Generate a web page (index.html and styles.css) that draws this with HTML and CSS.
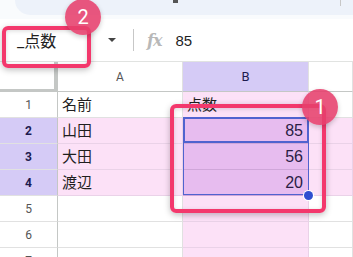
FILE: index.html
```html
<!DOCTYPE html>
<html lang="ja">
<head>
    <meta charset="UTF-8">
    <meta name="viewport" content="width=device-width, initial-scale=1.0">
    <title>名前付き範囲</title>
    <link rel="stylesheet" href="styles.css">
</head>
<body>
    <div class="page">
        <div class="toolbar">
            <span class="tool-mark"></span>
            <span class="tool-sep"></span>
        </div>

        <div class="formula-bar">
            <div class="name-box">_点数</div>
            <span class="caret"></span>
            <span class="divider"></span>
            <span class="fx">fx</span>
            <span class="formula">85</span>
        </div>

        <div class="sheet">
            <div class="corner"></div>
            <div class="col-head">A</div>
            <div class="col-head active">B</div>
            <div class="col-head"></div>

            <div class="row-head">1</div>
            <div class="cell">名前</div>
            <div class="cell pink">点数</div>
            <div class="cell"></div>

            <div class="row-head active">2</div>
            <div class="cell pink">山田</div>
            <div class="cell sel num">85</div>
            <div class="cell pink"></div>

            <div class="row-head active">3</div>
            <div class="cell pink">大田</div>
            <div class="cell sel num">56</div>
            <div class="cell pink"></div>

            <div class="row-head active">4</div>
            <div class="cell pink">渡辺</div>
            <div class="cell sel num">20</div>
            <div class="cell pink"></div>

            <div class="row-head">5</div>
            <div class="cell"></div>
            <div class="cell pink"></div>
            <div class="cell"></div>

            <div class="row-head">6</div>
            <div class="cell"></div>
            <div class="cell pink"></div>
            <div class="cell"></div>

            <div class="row-head">7</div>
            <div class="cell"></div>
            <div class="cell pink"></div>
            <div class="cell"></div>
        </div>

        <!-- selection outline and the callouts sit over the grid -->
        <div class="range"></div>
        <div class="active-cell"></div>
        <div class="handle"></div>

        <div class="mark mark-range"></div>
        <div class="badge badge-range">1</div>
        <div class="mark mark-name"></div>
        <div class="badge badge-name">2</div>
    </div>
</body>
</html>
```

FILE: styles.css
```css
body {
    margin: 0;
    background-color: #f9fbfd;
    font-family: Roboto, "Noto Sans CJK JP", sans-serif;
    overflow: hidden;
}
.page {
    position: relative;
    width: 353px;
    height: 257px;
    overflow: hidden;
}
.toolbar {
    position: relative;
    height: 15px;
    margin-left: 15px;
    background-color: #edf2fa;
    border-bottom-left-radius: 16px;
}
.tool-mark {
    position: absolute;
    left: 158px;
    top: 0;
    width: 5px;
    height: 3px;
    background-color: #555;
}
.tool-sep {
    position: absolute;
    left: 325px;
    top: 0;
    width: 1px;
    height: 6px;
    background-color: #c7c7c7;
}
.formula-bar {
    display: flex;
    align-items: center;
    height: 42px;
    margin-top: 4px;
    background-color: #fff;
    border-bottom: 1px solid #e1e3e1;
}
.name-box {
    width: 90px;
    padding-left: 17px;
    box-sizing: border-box;
    font-size: 16px;
    color: #1f1f1f;
}
.caret {
    width: 0;
    height: 0;
    margin-left: 18px;
    border-left: 4px solid transparent;
    border-right: 4px solid transparent;
    border-top: 4px solid #444;
}
.divider {
    width: 1px;
    height: 22px;
    margin-left: 17px;
    background-color: #c7c7c7;
}
.fx {
    margin-left: 13px;
    font-family: "DejaVu Serif", serif;
    font-style: italic;
    font-weight: bold;
    font-size: 16px;
    color: #b8b8b8;
    letter-spacing: -1px;
}
.formula {
    margin-left: 14px;
    font-family: "Liberation Sans", Arial, sans-serif;
    font-size: 15px;
    color: #1f1f1f;
}
.sheet {
    display: grid;
    grid-template-columns: 58px 125px 126px 44px;
    grid-template-rows: 30px repeat(7, 26px);
    background-color: #fff;
}
.corner {
    border-right: 4px solid #c4c7c5;
    border-bottom: 3px solid #c4c7c5;
    box-sizing: border-box;
}
.col-head,
.row-head {
    display: flex;
    align-items: center;
    justify-content: center;
    font-size: 12px;
    color: #555;
    background-color: #fff;
    border-right: 1px solid #e1e1e1;
    border-bottom: 1px solid #e1e1e1;
    box-sizing: border-box;
}
.col-head {
    border-bottom-color: #c4c7c5;
}
.row-head {
    border-right-color: #c4c7c5;
}
.col-head.active,
.row-head.active {
    background-color: #d5cbf6;
    color: #1d1b4f;
    font-weight: bold;
}
.col-head.active {
    font-weight: normal;
    font-size: 13px;
}
.cell {
    display: flex;
    align-items: flex-end;
    padding: 0 5px 3px 4px;
    font-family: "Liberation Sans", "Noto Sans CJK JP", sans-serif;
    font-size: 15px;
    color: #1f1f1f;
    border-right: 1px solid #e1e1e1;
    border-bottom: 1px solid #e1e1e1;
    box-sizing: border-box;
    overflow: hidden;
    white-space: nowrap;
}
.cell.pink {
    background-color: #fce1f7;
    border-color: #ead2e8;
}
.cell.sel {
    background-color: #e7bcef;
    border-color: #cfa6d9;
    color: #2a1d45;
    font-size: 16px;
}
.cell.num {
    justify-content: flex-end;
}
.range {
    position: absolute;
    left: 183px;
    top: 117px;
    width: 126px;
    height: 78px;
    border: 1px solid #5063cf;
    box-sizing: border-box;
}
.active-cell {
    position: absolute;
    left: 183px;
    top: 117px;
    width: 126px;
    height: 26px;
    border: 2px solid #5063cf;
    box-sizing: border-box;
}
.handle {
    position: absolute;
    left: 304px;
    top: 191px;
    width: 9px;
    height: 9px;
    border-radius: 50%;
    background-color: #2f4fd0;
    box-shadow: 0 0 0 1px #fff;
}
.mark {
    position: absolute;
    border: 4px solid #f3386c;
    border-radius: 6px;
    box-sizing: border-box;
    box-shadow: 0 2px 6px rgba(0, 0, 0, 0.25), inset 0 1px 4px rgba(0, 0, 0, 0.15);
}
.mark-name {
    left: 2px;
    top: 26px;
    width: 89px;
    height: 42px;
}
.mark-range {
    left: 170px;
    top: 104px;
    width: 156px;
    height: 109px;
}
.badge {
    position: absolute;
    width: 36px;
    height: 36px;
    border-radius: 50%;
    background-color: rgba(230, 63, 108, 0.88);
    color: #fff;
    font-family: Roboto, Arial, sans-serif;
    font-size: 20px;
    line-height: 36px;
    text-align: center;
    box-shadow: 0 2px 5px rgba(0, 0, 0, 0.2);
}
.badge-name {
    left: 65px;
    top: -1px;
}
.badge-range {
    left: 302px;
    top: 89px;
}
```
